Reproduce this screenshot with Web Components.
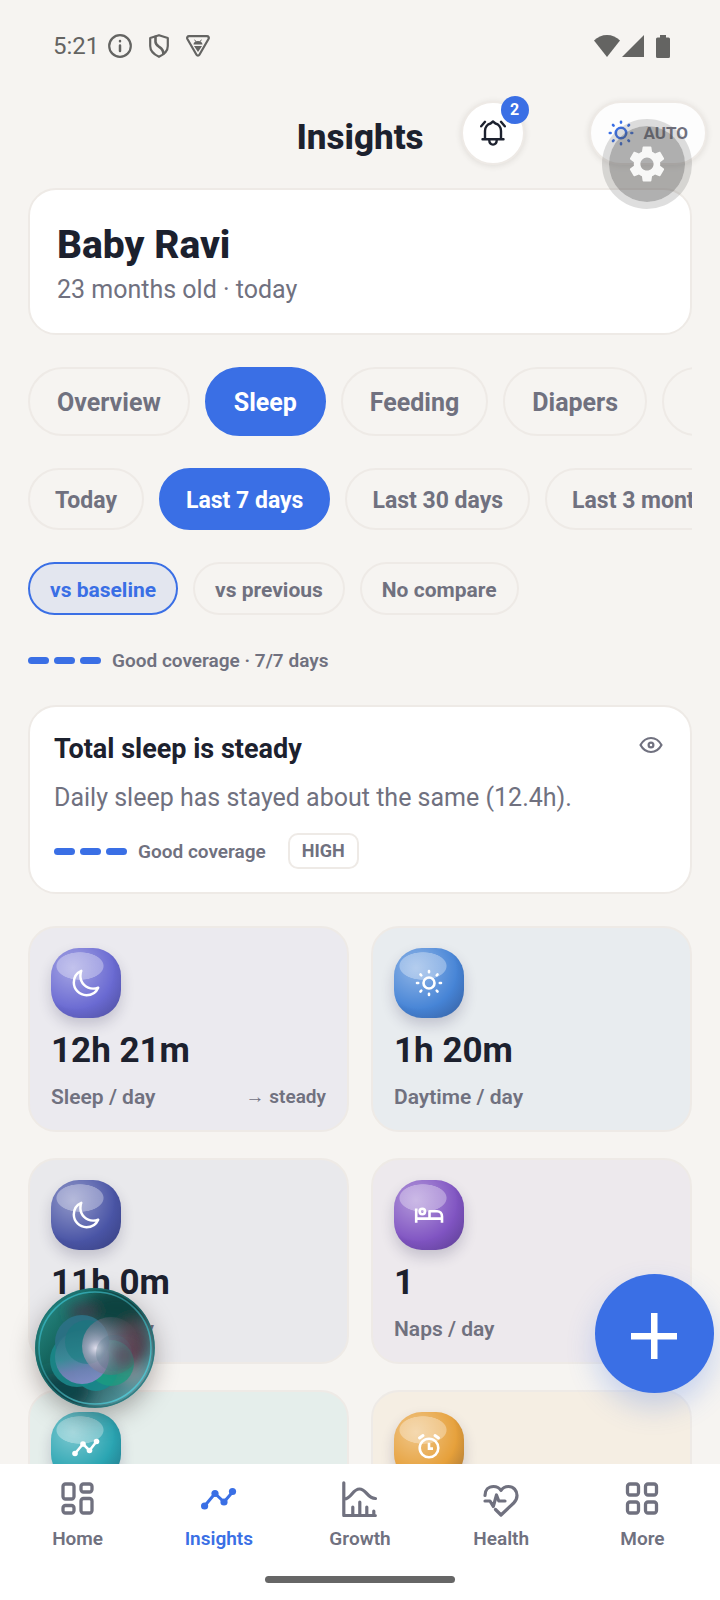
<!DOCTYPE html>
<html lang="en">
<head>
    <meta charset="UTF-8">
    <meta name="viewport" content="width=device-width, initial-scale=1.0">
    <title>Insights</title>
    <style>
        :root {
            --bg: #f6f4f1;
            --ink: #1c212e;
            --muted: #70717f;
            --line: #eeeae6;
            --blue: #3a6fe5;
        }
        body {
            margin: 0;
            background: var(--bg);
            color: var(--ink);
            font-family: Roboto, "Noto Sans", sans-serif;
        }
    </style>
</head>
<body>
    <app-shell>
        <status-bar slot="status"></status-bar>
        <page-header slot="header" count="2" mode="AUTO">Insights</page-header>

        <profile-card name="Baby Ravi">23 months old · today</profile-card>

        <chip-row>
            <filter-chip size="lg">Overview</filter-chip>
            <filter-chip size="lg" state="on">Sleep</filter-chip>
            <filter-chip size="lg">Feeding</filter-chip>
            <filter-chip size="lg">Diapers</filter-chip>
            <filter-chip size="lg" label="Growth"></filter-chip>
        </chip-row>
        <chip-row>
            <filter-chip size="md">Today</filter-chip>
            <filter-chip size="md" state="on">Last 7 days</filter-chip>
            <filter-chip size="md">Last 30 days</filter-chip>
            <filter-chip size="md">Last 3 months</filter-chip>
        </chip-row>
        <chip-row>
            <filter-chip size="sm" state="soft">vs baseline</filter-chip>
            <filter-chip size="sm">vs previous</filter-chip>
            <filter-chip size="sm">No compare</filter-chip>
        </chip-row>

        <coverage-meter>Good coverage · 7/7 days</coverage-meter>

        <insight-card heading="Total sleep is steady" coverage="Good coverage" level="HIGH">Daily sleep has stayed about the same (12.4h).</insight-card>

        <tile-grid>
            <stat-tile icon="moon" tone="#6a6ad2" tint="#ebeaef" value="12h 21m" trend="→ steady">Sleep / day</stat-tile>
            <stat-tile icon="sun" tone="#4684d6" tint="#e8ecef" value="1h 20m">Daytime / day</stat-tile>
            <stat-tile icon="moon" tone="#4a55a6" tint="#e9e9ec" value="11h 0m">Night / day</stat-tile>
            <stat-tile icon="bed" tone="#8054c2" tint="#ede9ed" value="1">Naps / day</stat-tile>
            <stat-tile icon="trend" tone="#2aa5b2" tint="#e5eeeb"></stat-tile>
            <stat-tile icon="alarm" tone="#e6a03a" tint="#f5eee3"></stat-tile>
        </tile-grid>

        <assistant-orb slot="float"></assistant-orb>
        <add-button slot="float"></add-button>
        <settings-bubble slot="float"></settings-bubble>

        <tab-bar slot="nav">
            <tab-item icon="home">Home</tab-item>
            <tab-item icon="insights" active>Insights</tab-item>
            <tab-item icon="growth">Growth</tab-item>
            <tab-item icon="health">Health</tab-item>
            <tab-item icon="more">More</tab-item>
        </tab-bar>
    </app-shell>

    <script>
        // name: [width, height, stroke width, markup]
        const ICONS = {
            info: [24, 24, 2.2, '<circle cx="12" cy="12" r="10.800"/><path d="M12 11.500v5.500M12 7v.2" stroke-width="2.500"/>'],
            shield: [20, 24, 2.2, '<path d="M10 1.200 18.800 4v8c0 5-4 8.600-8.800 10.800C5.200 20.600 1.200 17 1.200 12V4z"/><path d="M6.500 2.800v5c0 2 1 3.200 3.200 4.700s5 3 4.600 7.200" stroke-width="2.600"/>'],
            triangle: [24, 22, 2.2, '<path d="M3 1.200h18c1.500 0 2.300 1.500 1.500 2.800L13.400 19.800c-.7 1.200-2.200 1.200-2.900 0L1.400 4C.7 2.700 1.500 1.200 3 1.200z"/><path d="M7.500 9.500c0-2 2-3.500 4.500-3.500s4.500 1.500 4.500 3.500zM8 11h8l-4 6z" fill="currentColor" stroke="none"/><path d="m8.800 5 1 1.500M15.200 5l-1 1.500" stroke-width="1"/>'],
            wifi: [26, 22, 0, '<path d="M13 22 0 5.500C3.500 2 8 0 13 0s9.500 2 13 5.500z" fill="currentColor"/>'],
            signal: [22, 22, 0, '<path d="M22 0v22H0z" fill="currentColor"/>'],
            battery: [14, 23, 0, '<path d="M4 0h6v2.500h2.500A1.500 1.500 0 0 1 14 4v17.500a1.500 1.500 0 0 1-1.500 1.500h-11A1.500 1.500 0 0 1 0 21.500V4a1.500 1.500 0 0 1 1.500-1.500H4z" fill="currentColor"/>'],
            bell: [26, 26, 2.4, '<path d="M2.500 19.200h21M5 19v-8c0-4 2.600-6.800 5.500-7.500L13 1.500l2.500 2C18.400 4.200 21 7 21 11v8M9.200 20c.2 2.800 1.600 4.600 3.800 4.600s3.600-1.800 3.800-4.600M1.200 6.300 5 1.800M21 1.800l3.800 4.500"/>'],
            auto: [26, 26, 2.600, '<circle cx="13" cy="13" r="5.200"/><path d="M13 1.800v.8M13 23.400v.8M1.800 13h.8M23.400 13h.8M5 5l.6.6M20.400 20.400l.6.6M5 21l.6-.6M20.400 5.600l.6-.6"/>'],
            sun: [30, 30, 2.600, '<circle cx="15" cy="15" r="5.500"/><path d="M15 3v1.200M15 25.800V27M3 15h1.200M25.800 15H27M6.500 6.500l.8.8M22.700 22.700l.8.8M6.500 23.500l.8-.8M22.700 7.300l.8-.8"/>'],
            moon: [30, 30, 2.100, '<path transform="scale(.0586)" stroke-width="42" d="M160 136c0-30.620 4.510-61.610 16-88C99.570 81.270 48 159.320 48 248c0 119.290 96.710 216 216 216 88.680 0 166.730-51.570 200-128-26.390 11.490-57.380 16-88 16-119.290 0-216-96.710-216-216z"/>'],
            bed: [30, 30, 2.600, '<path stroke-linecap="butt" d="M2.200 8.500v14.300M28 22.800v-6.300c0-3-2-5.300-5-5.300h-7.500v7.300M2.200 18.600H28"/><circle cx="8.300" cy="11.500" r="2.700"/>'],
            trend: [30, 30, 2.500, '<path d="m4 21.500 8-9.500 6.500 6.500 7-9"/><g fill="currentColor" stroke="none"><circle cx="4" cy="21.500" r="2.800"/><circle cx="12" cy="12" r="2.800"/><circle cx="18.500" cy="18.500" r="2.800"/><circle cx="25.500" cy="9.500" r="2.800"/></g>'],
            alarm: [30, 30, 2.600, '<circle cx="15" cy="16" r="9.300"/><path stroke-linejoin="miter" stroke-linecap="butt" d="M15 10.800v5.800h4"/><path stroke-width="3" d="M5.500 6 9 3.500M24.500 6 21 3.500"/>'],
            eye: [24, 24, 2.200, '<path d="M1.500 12C4 7.500 7.500 5 12 5s8 2.500 10.500 7c-2.500 4.500-6 7-10.500 7S4 16.500 1.500 12z"/><circle cx="12" cy="12" r="2.400"/>'],
            home: [36, 36, 3.3, '<rect x="3" y="3" width="11" height="15" rx="2.500"/><rect x="21" y="3" width="11" height="8" rx="2.500"/><rect x="3" y="24.500" width="11" height="7.500" rx="2.500"/><rect x="21" y="17.500" width="11" height="14.500" rx="2.500"/>'],
            insights: [36, 36, 3, '<path d="m3.600 25 10.400-12.500 9 8.500 9-10.500"/><g fill="currentColor" stroke="none"><circle cx="3.600" cy="25" r="3.600"/><circle cx="14" cy="12.500" r="3.600"/><circle cx="23" cy="21" r="3.600"/><circle cx="31.500" cy="10.500" r="3.600"/></g>'],
            growth: [36, 36, 3.2, '<path d="M1.800 1.800v32.700h31.500M2.500 18c7-.5 8-10 15-10s7.500 9.500 16 9.500M10.800 26v8M17.800 21v13M24.800 26v8M31.800 30v4"/>'],
            health: [36, 36, 3.2, '<path d="M2 14.500C2 9 5.500 5.500 10.500 5.500c3 0 5.800 1.300 7.500 4 1.700-2.700 4.500-4 7.500-4 5 0 8.500 4 8.500 9 0 3-1.300 5.500-3.300 7.500L18 34l-5.500-5.500M2 20h5l3.300 5.500L13.500 14l2.300 6H22"/>'],
            more: [36, 36, 3.3, '<rect x="3.500" y="3" width="11" height="11" rx="2.500"/><rect x="21.500" y="3" width="11" height="11" rx="2.500"/><rect x="3.500" y="21" width="11" height="11" rx="2.500"/><rect x="21.500" y="21" width="11" height="11" rx="2.500"/>'],
            plus: [46, 46, 0, '<path d="M20 0h6.500v20H46v6.500H26.500V46H20V26.500H0V20h20z" fill="currentColor"/>'],
            gear: [44, 44, 0, '<path transform="scale(1.8333)" fill="currentColor" d="M19.140 12.940c.04-.3.06-.61.06-.94 0-.32-.02-.64-.07-.94l2.030-1.580c.18-.14.23-.41.12-.61l-1.920-3.320c-.12-.22-.37-.29-.59-.22l-2.390.96c-.5-.38-1.030-.7-1.620-.94l-.36-2.540c-.04-.24-.24-.41-.48-.41h-3.840c-.24 0-.43.17-.47.41l-.36 2.540c-.59.24-1.130.57-1.620.94l-2.390-.96c-.22-.08-.47 0-.59.22L2.740 8.870c-.12.21-.08.47.12.61l2.030 1.580c-.05.3-.09.63-.09.94s.02.64.07.94l-2.030 1.580c-.18.14-.23.41-.12.61l1.920 3.320c.12.22.37.29.59.22l2.390-.96c.5.38 1.030.7 1.620.94l.36 2.540c.05.24.24.41.48.41h3.840c.24 0 .44-.17.47-.41l.36-2.540c.59-.24 1.130-.56 1.620-.94l2.390.96c.22.08.47 0 .59-.22l1.920-3.320c.12-.22.07-.47-.12-.61l-2.010-1.580zM12 15.600c-1.980 0-3.600-1.620-3.600-3.600s1.620-3.600 3.600-3.600 3.600 1.620 3.600 3.600-1.620 3.600-3.600 3.600z"/>']
        };

        function icon(name) {
            const [w, h, sw, body] = ICONS[name];
            return `<svg width="${w}" height="${h}" viewBox="0 0 ${w} ${h}" fill="none" stroke="${sw ? 'currentColor' : 'none'}" stroke-width="${sw}" stroke-linecap="round" stroke-linejoin="round" aria-hidden="true">${body}</svg>`;
        }

        // shared base: each element only gives its markup in render()
        class BaseElement extends HTMLElement {
            constructor() {
                super();
                this.attachShadow({ mode: 'open' });
            }
            connectedCallback() {
                this.shadowRoot.innerHTML = `<style>
                    * { box-sizing: border-box; }
                    :host { display: block; box-sizing: border-box; }
                    svg { display: block; flex: none; }
                    button { font: inherit; color: inherit; margin: 0; cursor: pointer; }
                </style>` + this.render();
            }
            attr(name) {
                return this.getAttribute(name) || '';
            }
        }

        class AppShell extends BaseElement {
            render() {
                return `<style>
                    :host { display: flex; flex-direction: column; height: 100vh; position: relative; overflow: hidden; }
                    main {
                        flex: 1; min-height: 0; overflow-y: auto; scrollbar-width: none;
                        display: flex; flex-direction: column; gap: 32px; padding: 23px 28px 0;
                    }
                    ::slotted(*) { flex: none; }
                </style>
                <slot name="status"></slot>
                <slot name="header"></slot>
                <main><slot></slot></main>
                <slot name="nav"></slot>
                <slot name="float"></slot>`;
            }
        }

        class StatusBar extends BaseElement {
            render() {
                return `<style>
                    :host { display: flex; align-items: center; gap: 17px; height: 92px; padding: 0 50px 0 53px; color: #646462; font-size: 24px; }
                    .time { display: flex; align-items: center; gap: 9px; }
                    .right { display: flex; align-items: center; gap: 2px; margin-left: auto; }
                    .battery { margin-left: 10px; }
                </style>
                <span class="time">5:21 ${icon('info')}</span>
                ${icon('shield')}
                ${icon('triangle')}
                <span class="right">${icon('wifi')}${icon('signal')}<span class="battery">${icon('battery')}</span></span>`;
            }
        }

        class PageHeader extends BaseElement {
            render() {
                return `<style>
                    :host { display: grid; grid-template-columns: 1fr auto 1fr; align-items: center; padding: 9px 13px 0; }
                    h1 { grid-column: 2; margin: 0; padding-top: 10px; font-size: 35px; line-height: 42px; font-weight: 800; }
                    .actions { display: flex; justify-content: space-between; padding-left: 37px; }
                    button {
                        height: 64px; border: 2px solid var(--line); background: #fff;
                        display: flex; align-items: center; justify-content: center;
                        box-shadow: 0 1px 6px rgba(60, 50, 40, .12);
                    }
                    .bell { position: relative; width: 64px; border-radius: 32px; padding: 0; }
                    .badge {
                        position: absolute; top: -7px; right: -6px; width: 28px; height: 28px; border-radius: 14px;
                        background: var(--blue); color: #fff; font-size: 16px; line-height: 28px; font-weight: 700; text-align: center;
                    }
                    .mode {
                        border-radius: 32px; padding: 0 17px; gap: 9px; background: #fdfdfd;
                        color: var(--muted); font-size: 17px; font-weight: 700;
                    }
                    .mode svg { color: var(--blue); }
                </style>
                <h1><slot></slot></h1>
                <div class="actions">
                    <button class="bell" aria-label="Notifications">${icon('bell')}<span class="badge">${this.attr('count')}</span></button>
                    <button class="mode">${icon('auto')}<span>${this.attr('mode')}</span></button>
                </div>`;
            }
        }

        class ProfileCard extends BaseElement {
            render() {
                return `<style>
                    :host { padding: 29px 27px 25px; background: #fff; border: 2px solid var(--line); border-radius: 28px; }
                    h2 { margin: 0; font-size: 39px; line-height: 53px; font-weight: 800; }
                    p { margin: 0; font-size: 25px; line-height: 36px; color: var(--muted); }
                </style>
                <h2>${this.attr('name')}</h2>
                <p><slot></slot></p>`;
            }
        }

        class ChipRow extends BaseElement {
            render() {
                return `<style>
                    :host { display: flex; gap: 15px; overflow: hidden; }
                    ::slotted(*) { flex: none; }
                </style>
                <slot></slot>`;
            }
        }

        class FilterChip extends BaseElement {
            render() {
                const label = this.attr('label');
                return `<style>
                    button {
                        display: block; white-space: nowrap; background: none; color: var(--muted);
                        border: 2px solid var(--line); border-radius: 36px; font-weight: 700;
                    }
                    :host([size="lg"]) button { height: 69px; min-width: 120px; padding: 2px 27px 0; font-size: 25px; }
                    :host([size="md"]) button { height: 62px; padding: 2px 25px 0; font-size: 23px; }
                    :host([size="sm"]) button { height: 53px; padding: 2px 20px 0; font-size: 21px; }
                    :host([state="on"]) button { background: var(--blue); border-color: var(--blue); color: #fff; }
                    :host([state="soft"]) button { background: #e3e6ef; border-color: var(--blue); color: var(--blue); }
                </style>
                <button${label ? ` aria-label="${label}"` : ''}><slot></slot></button>`;
            }
        }

        class CoverageMeter extends BaseElement {
            render() {
                return `<style>
                    :host { display: flex; align-items: center; gap: 11px; font-size: 19px; line-height: 26px; font-weight: 600; color: var(--muted); }
                    .bars { display: flex; gap: 5px; }
                    i { width: 21px; height: 7px; border-radius: 4px; background: var(--blue); }
                    .text { padding-top: 2px; line-height: 24px; }
                </style>
                <span class="bars"><i></i><i></i><i></i></span>
                <span class="text"><slot></slot></span>`;
            }
        }

        class InsightCard extends BaseElement {
            render() {
                return `<style>
                    :host { padding: 24px 24px 23px; background: #fff; border: 2px solid var(--line); border-radius: 28px; }
                    header { display: flex; justify-content: space-between; align-items: flex-start; }
                    h3 { margin: 0; font-size: 27px; line-height: 36px; font-weight: 700; }
                    button { padding: 2px 3px; border: 0; background: none; color: var(--muted); }
                    p { margin: 0; padding: 11px 0 15px; font-size: 25px; line-height: 40px; color: var(--muted); }
                    footer { display: flex; align-items: center; gap: 22px; }
                    .level {
                        padding: 0 12px; border: 2px solid var(--line); border-radius: 10px;
                        font-size: 18px; line-height: 32px; font-weight: 700; color: var(--muted);
                    }
                </style>
                <header><h3>${this.attr('heading')}</h3><button aria-label="Hide">${icon('eye')}</button></header>
                <p><slot></slot></p>
                <footer>
                    <coverage-meter>${this.attr('coverage')}</coverage-meter>
                    <span class="level">${this.attr('level')}</span>
                </footer>`;
            }
        }

        class TileGrid extends BaseElement {
            render() {
                return `<style>
                    :host { display: grid; grid-template-columns: 1fr 1fr; gap: 26px 22px; }
                </style>
                <slot></slot>`;
            }
        }

        class StatTile extends BaseElement {
            render() {
                const tone = this.attr('tone');
                return `<style>
                    :host {
                        min-height: 206px; padding: 20px 21px; border: 2px solid var(--line);
                        border-radius: 28px; background: ${this.attr('tint')};
                    }
                    /* glossy icon: highlight top left, shade bottom right */
                    .gem {
                        display: flex; align-items: center; justify-content: center;
                        width: 70px; height: 70px; border-radius: 28px; color: #fff;
                        background:
                            radial-gradient(24px 14px at 29px 18px, rgba(255, 255, 255, .32) 96%, transparent),
                            radial-gradient(circle at 22px 20px, rgba(255, 255, 255, .4), transparent 42px),
                            radial-gradient(circle at 26px 24px, transparent 36px, rgba(20, 20, 50, .34) 62px),
                            ${tone};
                        box-shadow: 0 7px 14px rgba(40, 35, 80, .2);
                    }
                    strong { display: block; padding-top: 11px; font-size: 35px; line-height: 44px; font-weight: 700; }
                    .foot { display: flex; justify-content: space-between; align-items: center; padding-top: 11px; font-size: 21px; line-height: 26px; font-weight: 600; color: var(--muted); }
                    .trend { font-size: 19px; }
                </style>
                <div class="gem">${icon(this.attr('icon'))}</div>
                <strong>${this.attr('value')}</strong>
                <div class="foot"><span><slot></slot></span><span class="trend">${this.attr('trend')}</span></div>`;
            }
        }

        class AssistantOrb extends BaseElement {
            render() {
                return `<style>
                    :host { position: absolute; left: 35px; bottom: 192px; }
                    button { display: block; padding: 0; border: 0; border-radius: 60px; background: none; box-shadow: 0 8px 24px rgba(40, 30, 30, .35); }
                </style>
                <button aria-label="Assistant">
                    <svg width="120" height="120" viewBox="0 0 120 120">
                        <defs>
                            <linearGradient id="base" x1="0" y1=".1" x2="1" y2=".9">
                                <stop offset="0" stop-color="#2b8f89"/><stop offset=".3" stop-color="#15665f"/>
                                <stop offset=".6" stop-color="#2a5a5e"/><stop offset="1" stop-color="#65b4bd"/>
                            </linearGradient>
                            <linearGradient id="petal" x1=".3" y1="0" x2=".5" y2="1">
                                <stop offset="0" stop-color="#2f6f80"/><stop offset=".5" stop-color="#3d8c9a"/><stop offset=".75" stop-color="#7780b8"/><stop offset="1" stop-color="#8a8aca"/>
                            </linearGradient>
                            <radialGradient id="glow" cx=".24" cy=".54" r=".76">
                                <stop offset="0" stop-color="#e2e0ee"/><stop offset=".2" stop-color="#aaa9c0" stop-opacity=".85"/>
                                <stop offset=".6" stop-color="#7d7186" stop-opacity=".5"/><stop offset="1" stop-color="#5d4d59" stop-opacity=".12"/>
                            </radialGradient>
                            <linearGradient id="rim" x1="0" y1="0" x2="1" y2="1">
                                <stop offset="0" stop-color="#38c2cd"/><stop offset=".45" stop-color="#2a7f84"/><stop offset="1" stop-color="#62d9e8"/>
                            </linearGradient>
                            <filter id="soft" x="-50%" y="-50%" width="200%" height="200%"><feGaussianBlur stdDeviation="7"/></filter>
                            <clipPath id="round"><circle cx="60" cy="60" r="59"/></clipPath>
                        </defs>
                        <circle cx="60" cy="60" r="60" fill="url(#base)"/>
                        <g clip-path="url(#round)">
                            <g filter="url(#soft)">
                                <ellipse cx="82" cy="20" rx="30" ry="18" fill="#07433f"/>
                                <ellipse cx="28" cy="102" rx="26" ry="18" fill="#0b444a"/>
                                <ellipse cx="48" cy="24" rx="14" ry="8" fill="#403e4d"/>
                                <ellipse cx="98" cy="55" rx="15" ry="22" fill="#54434f"/>
                                <ellipse cx="98" cy="86" rx="13" ry="11" fill="#7a9298"/>
                            </g>
                            <circle cx="42" cy="72" r="27" fill="#1b8a8c" opacity=".85"/>
                            <circle cx="61" cy="81" r="22" fill="#17898d" opacity=".9"/>
                            <circle cx="76" cy="75" r="23" fill="#1b9c7f" opacity=".8"/>
                            <circle cx="47" cy="54" r="27" fill="#2c7186" opacity=".9"/>
                            <circle cx="47" cy="69" r="27" fill="url(#petal)" opacity=".88"/>
                            <circle cx="52" cy="54" r="22" fill="#12797c" opacity=".45"/>
                            <circle cx="76" cy="58" r="29" fill="url(#glow)"/>
                            <circle cx="79" cy="65" r="18" fill="#4d7383" opacity=".25"/>
                            <circle cx="90" cy="68" r="12" fill="#6b2c47" opacity=".5" filter="url(#soft)"/>
                        </g>
                        <circle cx="60" cy="60" r="56" fill="none" stroke="url(#rim)" stroke-width="1.500"/>
                        <circle cx="60" cy="60" r="59" fill="none" stroke="#1c6d70" stroke-width="1.500" opacity=".6"/>
                    </svg>
                </button>`;
            }
        }

        class AddButton extends BaseElement {
            render() {
                return `<style>
                    :host { position: absolute; right: 6px; bottom: 207px; }
                    button {
                        display: flex; align-items: center; justify-content: center; width: 119px; height: 119px;
                        padding: 5px 1px 0 0; border: 0; border-radius: 60px; background: var(--blue); color: #fff;
                        box-shadow: 0 14px 28px rgba(58, 111, 229, .25);
                    }
                </style>
                <button aria-label="Add">${icon('plus')}</button>`;
            }
        }

        class SettingsBubble extends BaseElement {
            render() {
                return `<style>
                    :host { position: absolute; right: 28px; top: 119px; }
                    button {
                        display: flex; align-items: center; justify-content: center; width: 90px; height: 90px; padding: 0;
                        border: 7px solid rgba(90, 90, 90, .2); border-radius: 45px; color: #f8f8f7;
                        background: rgba(80, 80, 80, .45); background-clip: padding-box;
                    }
                </style>
                <button aria-label="Settings">${icon('gear')}</button>`;
            }
        }

        class TabBar extends BaseElement {
            render() {
                return `<style>
                    :host { background: #fff; height: 136px; padding: 17px 7px 0; position: relative; }
                    nav { display: flex; }
                    ::slotted(*) { flex: 1; }
                    .handle { width: 190px; height: 7px; margin: 24px auto 0; border-radius: 4px; background: #666; }
                </style>
                <nav><slot></slot></nav>
                <div class="handle"></div>`;
            }
        }

        class TabItem extends BaseElement {
            render() {
                return `<style>
                    a {
                        display: flex; flex-direction: column; align-items: center; gap: 9px;
                        font-size: 19px; line-height: 26px; font-weight: 600; color: var(--muted); text-decoration: none;
                    }
                    :host([active]) a { color: var(--blue); }
                </style>
                <a href="#${this.attr('icon')}">${icon(this.attr('icon'))}<span><slot></slot></span></a>`;
            }
        }

        customElements.define('app-shell', AppShell);
        customElements.define('status-bar', StatusBar);
        customElements.define('page-header', PageHeader);
        customElements.define('profile-card', ProfileCard);
        customElements.define('chip-row', ChipRow);
        customElements.define('filter-chip', FilterChip);
        customElements.define('coverage-meter', CoverageMeter);
        customElements.define('insight-card', InsightCard);
        customElements.define('tile-grid', TileGrid);
        customElements.define('stat-tile', StatTile);
        customElements.define('assistant-orb', AssistantOrb);
        customElements.define('add-button', AddButton);
        customElements.define('settings-bubble', SettingsBubble);
        customElements.define('tab-bar', TabBar);
        customElements.define('tab-item', TabItem);
    </script>
</body>
</html>
